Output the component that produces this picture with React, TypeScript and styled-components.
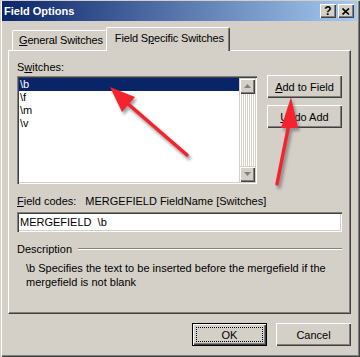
import React from "react";
import styled, { createGlobalStyle } from "styled-components";

const GlobalStyle = createGlobalStyle`
  html, body {
    margin: 0;
    padding: 0;
    background: #d4d0c8;
  }
  body {
    font-family: "Liberation Sans", Arial, sans-serif;
    font-size: 11px;
    color: #000;
  }
`;

const Window = styled.div`
  position: relative;
  box-sizing: border-box;
  width: 360px;
  height: 357px;
  background: #d4d0c8;
  padding: 1px 3px 3px 2px;
  box-shadow: inset 1px 1px 0 #d4d0c8, inset 2px 0 0 #fff,
    inset -1px -1px 0 #404040, inset -2px -2px 0 #808080;
  display: flex;
  flex-direction: column;
  overflow: hidden;
`;

const TitleBar = styled.div`
  height: 20px;
  display: flex;
  align-items: center;
  padding: 0 3px 0 2px;
  background: linear-gradient(to right, #0a246a 0%, #a6caf0 100%);
`;

const Title = styled.span`
  flex: 1;
  color: #fff;
  font-weight: bold;
  font-size: 11px;
`;

const CaptionButton = styled.div`
  width: 16px;
  height: 14px;
  box-sizing: border-box;
  background: #d4d0c8;
  margin-left: 2px;
  display: flex;
  align-items: center;
  justify-content: center;
  font-weight: bold;
  font-size: 12px;
  box-shadow: inset 1px 1px 0 #fff, inset -1px -1px 0 #404040,
    inset -2px -2px 0 #808080;
`;

const TabRow = styled.div`
  display: flex;
  align-items: flex-end;
  height: 29px;
  padding-left: 8px;
  position: relative;
  z-index: 1;
`;

const Tab = styled.div<{ $active?: boolean }>`
  box-sizing: border-box;
  height: ${(p) => (p.$active ? 24 : 20)}px;
  margin-bottom: ${(p) => (p.$active ? -1 : 0)}px;
  margin-left: ${(p) => (p.$active ? -2 : 2)}px;
  padding: ${(p) => (p.$active ? "4px 5px 0 8px" : "3px 4px 0 6px")};
  background: #d4d0c8;
  border-top: 1px solid #fff;
  border-left: 1px solid #fff;
  border-right: 1px solid #404040;
  border-radius: 2px 2px 0 0;
  box-shadow: inset -1px 0 0 #808080;
  white-space: nowrap;
  letter-spacing: -0.15px;
`;

const Panel = styled.div`
  box-sizing: border-box;
  margin-left: 6px;
  width: 343px;
  height: 264px;
  border-top: 1px solid #fff;
  border-left: 1px solid #fff;
  border-right: 1px solid #404040;
  border-bottom: 1px solid #404040;
  box-shadow: inset -1px -1px 0 #808080;
  padding: 10px 8px 0 8px;
  display: flex;
  flex-direction: column;
`;

const Label = styled.div`
  height: 13px;
  line-height: 13px;
`;

const ListRow = styled.div`
  display: flex;
  margin-top: 2px;
  gap: 10px;
`;

const ListBox = styled.div`
  box-sizing: border-box;
  width: 240px;
  height: 108px;
  background: #fff;
  display: flex;
  box-shadow: inset 1px 1px 0 #808080, inset 2px 2px 0 #404040,
    inset -1px -1px 0 #fff, inset -2px -2px 0 #d4d0c8;
  padding: 2px;
`;

const Items = styled.div`
  flex: 1;
`;

const Item = styled.div<{ $selected?: boolean }>`
  height: 13px;
  line-height: 13px;
  padding-left: 1px;
  background: ${(p) => (p.$selected ? "#0a246a" : "transparent")};
  color: ${(p) => (p.$selected ? "#fff" : "#000")};
`;

const ScrollBar = styled.div`
  width: 16px;
  display: flex;
  flex-direction: column;
  background-color: #fff;
  background-image: linear-gradient(45deg, #d4d0c8 25%, transparent 25%),
    linear-gradient(-45deg, #d4d0c8 25%, transparent 25%),
    linear-gradient(45deg, transparent 75%, #d4d0c8 75%),
    linear-gradient(-45deg, transparent 75%, #d4d0c8 75%);
  background-size: 2px 2px;
`;

const ScrollButton = styled.div`
  width: 16px;
  height: 16px;
  box-sizing: border-box;
  background: #d4d0c8;
  display: flex;
  align-items: center;
  justify-content: center;
  box-shadow: inset 1px 1px 0 #d4d0c8, inset 2px 2px 0 #fff,
    inset -1px -1px 0 #404040, inset -2px -2px 0 #808080;
`;

const Track = styled.div`
  flex: 1;
`;

const SideButtons = styled.div`
  display: flex;
  flex-direction: column;
  gap: 7px;
  margin-top: -1px;
`;

const Button = styled.div<{ $default?: boolean }>`
  box-sizing: border-box;
  width: 75px;
  height: 23px;
  display: flex;
  align-items: center;
  justify-content: center;
  background: #d4d0c8;
  position: relative;
  box-shadow: ${(p) =>
    p.$default
      ? "inset 0 0 0 1px #000, inset 2px 2px 0 #fff, inset -2px -2px 0 #404040, inset -3px -3px 0 #808080"
      : "inset 1px 1px 0 #fff, inset -1px -1px 0 #404040, inset -2px -2px 0 #808080"};
`;

const FocusRing = styled.div`
  position: absolute;
  inset: 4px;
  border: 1px dotted #000;
`;

const CodesRow = styled.div`
  display: flex;
  gap: 9px;
  margin-top: 11px;
  height: 13px;
  line-height: 13px;
`;

const Input = styled.div`
  box-sizing: border-box;
  width: 325px;
  height: 20px;
  margin-top: 4px;
  background: #fff;
  padding: 3px 3px;
  line-height: 14px;
  white-space: pre;
  box-shadow: inset 1px 1px 0 #808080, inset 2px 2px 0 #404040,
    inset -1px -1px 0 #fff, inset -2px -2px 0 #d4d0c8;
`;

const GroupHeader = styled.div`
  display: flex;
  align-items: center;
  gap: 6px;
  margin-top: 10px;
  height: 13px;
`;

const Rule = styled.div`
  flex: 1;
  height: 0;
  border-top: 1px solid #808080;
  border-bottom: 1px solid #fff;
`;

const Description = styled.p`
  margin: 6px 0 0 9px;
  line-height: 14px;
  width: 310px;
`;

const Footer = styled.div`
  display: flex;
  justify-content: flex-end;
  gap: 9px;
  margin-top: 9px;
  padding-right: 6px;
`;

const Overlay = styled.svg`
  position: absolute;
  left: 0;
  top: 0;
  pointer-events: none;
`;

const U = styled.span`
  text-decoration: underline;
`;

function Arrow({ d, head }: { d: string; head: string }) {
  return (
    <g>
      <g transform="translate(2 3)" opacity="0.55" filter="url(#blur)">
        <path d={d} stroke="#555" strokeWidth="4" strokeLinecap="round" fill="none" />
        <polygon points={head} fill="#555" />
      </g>
      <path d={d} stroke="#f5232d" strokeWidth="3.5" strokeLinecap="round" fill="none" />
      <polygon points={head} fill="#f5232d" />
    </g>
  );
}

export default function App() {
  return (
    <Window>
      <GlobalStyle />
      <TitleBar>
        <Title>Field Options</Title>
        <CaptionButton>?</CaptionButton>
        <CaptionButton>
          <svg width="8" height="7" viewBox="0 0 8 7">
            <path d="M0.5 0.5 L7 6.5 M7 0.5 L0.5 6.5" stroke="#000" strokeWidth="1.6" />
          </svg>
        </CaptionButton>
      </TitleBar>
      <TabRow>
        <Tab>
          <U>G</U>eneral Switches
        </Tab>
        <Tab $active>
          Field S<U>p</U>ecific Switches
        </Tab>
      </TabRow>
      <Panel>
        <Label>
          S<U>w</U>itches:
        </Label>
        <ListRow>
          <ListBox>
            <Items>
              <Item $selected>\b</Item>
              <Item>\f</Item>
              <Item>\m</Item>
              <Item>\v</Item>
            </Items>
            <ScrollBar>
              <ScrollButton>
                <svg width="7" height="4" viewBox="0 0 7 4">
                  <polygon points="3.5,0 7,4 0,4" fill="#808080" />
                </svg>
              </ScrollButton>
              <Track />
              <ScrollButton>
                <svg width="7" height="4" viewBox="0 0 7 4">
                  <polygon points="0,0 7,0 3.5,4" fill="#808080" />
                </svg>
              </ScrollButton>
            </ScrollBar>
          </ListBox>
          <SideButtons>
            <Button>
              <span>
                <U>A</U>dd to Field
              </span>
            </Button>
            <Button>
              <span>
                <U>U</U>ndo Add
              </span>
            </Button>
          </SideButtons>
        </ListRow>
        <CodesRow>
          <span>
            <U>F</U>ield codes:
          </span>
          <span>MERGEFIELD FieldName [Switches]</span>
        </CodesRow>
        <Input>{"MERGEFIELD  \\b"}</Input>
        <GroupHeader>
          <span>Description</span>
          <Rule />
        </GroupHeader>
        <Description>
          \b Specifies the text to be inserted before the mergefield if the mergefield is not blank
        </Description>
      </Panel>
      <Footer>
        <Button $default>
          <FocusRing />
          OK
        </Button>
        <Button>Cancel</Button>
      </Footer>
      <Overlay width="360" height="357" viewBox="0 0 360 357">
        <defs>
          <filter id="blur" x="-20%" y="-20%" width="140%" height="140%">
            <feGaussianBlur stdDeviation="1.5" />
          </filter>
        </defs>
        <Arrow d="M187 155 L127 103" head="110,87 135,97 122,112" />
        <Arrow d="M277 184 L289 124" head="291,97 281,128 298,128" />
      </Overlay>
    </Window>
  );
}
